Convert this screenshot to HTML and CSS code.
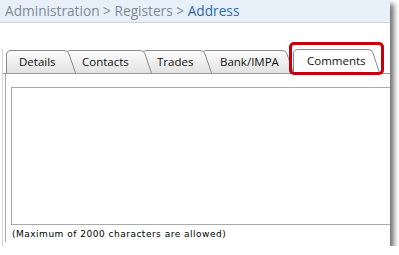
FILE: index.html
```html
<!DOCTYPE html>
<html lang="en">
<head>
  <meta charset="UTF-8">
  <title>Address | Registers</title>
  <link rel="stylesheet" href="styles.css">
</head>
<body>
  <svg class="defs" width="0" height="0">
    <defs>
      <linearGradient id="tabfill" x1="0" y1="0" x2="0" y2="1">
        <stop offset="0" stop-color="#fdfdfd"/>
        <stop offset="1" stop-color="#e2e2e2"/>
      </linearGradient>
    </defs>
  </svg>

  <div class="window">
    <div class="crumb">
      Administration &gt; Registers &gt; <span class="current">Address</span>
    </div>

    <div class="main">
      <div class="tabs">
        <div class="tab tab-details">
          <svg width="70" height="23"><path d="M0.5,23 V5 Q0.5,0.5 5,0.5 H58 Q62,0.5 63,4 L69.5,23"/></svg>
          <span>Details</span>
        </div>
        <div class="tab tab-contacts">
          <svg width="86" height="23"><path d="M0.5,23 V5 Q0.5,0.5 5,0.5 H74 Q78,0.5 79,4 L85.5,23"/></svg>
          <span>Contacts</span>
        </div>
        <div class="tab tab-trades">
          <svg width="70" height="23"><path d="M0.5,23 V5 Q0.5,0.5 5,0.5 H58 Q62,0.5 63,4 L69.5,23"/></svg>
          <span>Trades</span>
        </div>
        <div class="tab tab-bank">
          <svg width="92" height="23"><path d="M0.5,23 V5 Q0.5,0.5 5,0.5 H80 Q84,0.5 85,4 L91.5,23"/></svg>
          <span>Bank/IMPA</span>
        </div>
        <div class="tab tab-comments active">
          <svg width="87" height="24"><path d="M0.5,24 V5 Q0.5,0.5 5,0.5 H75 Q79,0.5 80,4 L86.5,24"/></svg>
          <span>Comments</span>
          <div class="highlight"></div>
        </div>
      </div>

      <div class="panel">
        <textarea class="comments" maxlength="2000"></textarea>
        <div class="note">(Maximum of 2000 characters are allowed)</div>
      </div>
    </div>
  </div>
</body>
</html>
```

FILE: styles.css
```css
body {
  margin: 0;
  background: #fff;
  font-family: "Open Sans", sans-serif;
  color: #000;
}

.defs {
  position: absolute;
}

.window {
  width: 390px;
  height: 246px;
  background: #fff;
  overflow: hidden;
  box-shadow: 4px 4px 5px rgba(0, 0, 0, 0.55);
}

.crumb {
  height: 22px;
  padding-left: 5px;
  background: #e7eff9;
  border-bottom: 1px solid #ccd6e0;
  color: #7d8b97;
  font-size: 13.7px;
  line-height: 21px;
  white-space: nowrap;
}

.crumb .current {
  color: #2f6aa3;
}

.main {
  margin-left: 2px;
  height: 223px;
  border-left: 1px solid #d6d6d6;
}

.tabs {
  display: flex;
  align-items: flex-end;
  margin-top: 26px;
  padding-left: 3px;
  border-bottom: 1px solid #999;
}

.tab {
  position: relative;
  height: 23px;
  margin-right: -10px;
  font-size: 11.5px;
  line-height: 23px;
  color: #111;
}

.tab svg {
  position: absolute;
  left: 0;
  top: 0;
}

.tab svg path {
  fill: url(#tabfill);
  stroke: #8a8a8a;
  stroke-width: 1;
}

.tab span {
  position: relative;
}

.tab-details { width: 70px; padding-left: 13px; box-sizing: border-box; z-index: 5; }
.tab-contacts { width: 86px; padding-left: 16px; box-sizing: border-box; z-index: 4; }
.tab-trades { width: 70px; padding-left: 15px; box-sizing: border-box; z-index: 3; }
.tab-bank { width: 92px; padding-left: 18px; box-sizing: border-box; z-index: 2; margin-right: -1px; }

.tab.active {
  width: 87px;
  height: 24px;
  padding-left: 14px;
  box-sizing: border-box;
  z-index: 6;
}

.tab.active svg path {
  fill: #fff;
}

.highlight {
  position: absolute;
  left: -4px;
  top: -7px;
  width: 95px;
  height: 33px;
  box-sizing: border-box;
  border: 3px solid #c4000c;
  border-radius: 5px;
}

.panel {
  margin-left: 2px;
  height: 168px;
  padding: 13px 0 0 5px;
  box-sizing: border-box;
  border-left: 1px solid #aaa;
}

.comments {
  display: block;
  width: 400px;
  height: 138px;
  box-sizing: border-box;
  margin: 0;
  border: 1px solid #aaa;
  resize: none;
}

.note {
  margin-top: 3px;
  margin-left: 1px;
  font-family: "DejaVu Sans", sans-serif;
  font-size: 9px;
  letter-spacing: 0.5px;
  line-height: 12px;
  white-space: nowrap;
}
```
